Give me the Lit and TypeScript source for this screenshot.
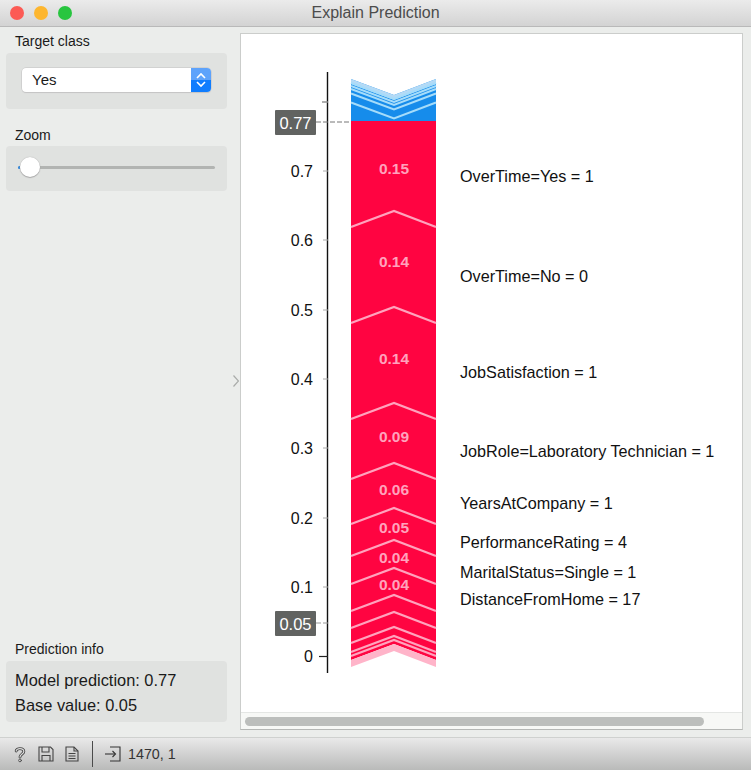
import { LitElement, html, svg, css } from "lit";
import { customElement } from "lit/decorators.js";

const LEFT = 351;
const MID = 394;
const RIGHT = 436;
const DROP = 16;

// red segments point up, blue ones point down
const chevron = (apex: number) =>
  `M${LEFT} ${apex + DROP} L${MID} ${apex} L${RIGHT} ${apex + DROP}`;
const vee = (apex: number) =>
  `M${LEFT} ${apex - DROP} L${MID} ${apex} L${RIGHT} ${apex - DROP}`;

const TICKS = [
  { label: "0.7", y: 171 },
  { label: "0.6", y: 240 },
  { label: "0.5", y: 310 },
  { label: "0.4", y: 379 },
  { label: "0.3", y: 448 },
  { label: "0.2", y: 518 },
  { label: "0.1", y: 587 },
];

const RED_LINES = [211, 307, 403, 463, 508, 540, 568, 595, 612, 627, 636, 640];
const BLUE_LINES = [118.5, 109.5, 105, 102, 99];

const VALUES = [
  { text: "0.15", y: 168.5 },
  { text: "0.14", y: 261.5 },
  { text: "0.14", y: 358.5 },
  { text: "0.09", y: 436.5 },
  { text: "0.06", y: 489.5 },
  { text: "0.05", y: 527.5 },
  { text: "0.04", y: 557.5 },
  { text: "0.04", y: 584.5 },
];

const FEATURES = [
  { text: "OverTime=Yes = 1", y: 176 },
  { text: "OverTime=No = 0", y: 276 },
  { text: "JobSatisfaction = 1", y: 372 },
  { text: "JobRole=Laboratory Technician = 1", y: 451 },
  { text: "YearsAtCompany = 1", y: 503 },
  { text: "PerformanceRating = 4", y: 542 },
  { text: "MaritalStatus=Single = 1", y: 572 },
  { text: "DistanceFromHome = 17", y: 599 },
];

@customElement("explain-chart")
class ExplainChart extends LitElement {
  static styles = css`
    :host {
      display: block;
      flex: 1;
      min-height: 0;
    }

    svg {
      display: block;
    }

    text {
      font-family: "Liberation Sans", Arial, sans-serif;
    }

    .tick {
      font-size: 16px;
      fill: #111;
      text-anchor: end;
      dominant-baseline: central;
    }

    .feature {
      font-size: 16.2px;
      fill: #111;
      dominant-baseline: central;
    }

    .value {
      font-size: 15.5px;
      font-weight: 700;
      fill: #ffa3bd;
      text-anchor: middle;
      dominant-baseline: central;
    }

    .badge {
      font-size: 16.5px;
      fill: #fff;
      text-anchor: middle;
      dominant-baseline: central;
    }
  `;

  render() {
    return html`<svg width="501" height="678" viewBox="241 34 501 678">
      <!-- blue stack -->
      <path d="M${LEFT} 79 L${MID} 95 L${RIGHT} 79 V121 H${LEFT} Z" fill="#168ceb" />
      <path d="M${LEFT} 79 L${MID} 95 L${RIGHT} 79 V84 L${MID} 100 L${LEFT} 84 Z" fill="#b4daf6" />
      ${BLUE_LINES.map(
        (a) => svg`<path d=${vee(a)} fill="none" stroke="#a5dcfa" stroke-width="2" />`
      )}

      <!-- red stack -->
      <path d="M${LEFT} 121 H${RIGHT} V660 L${MID} 644 L${LEFT} 660 Z" fill="#ff0441" />
      <path
        d="M${LEFT} 660 L${MID} 644 L${RIGHT} 660 V667 L${MID} 651 L${LEFT} 667 Z"
        fill="#ffb4c9"
      />
      ${RED_LINES.map(
        (a) => svg`<path d=${chevron(a)} fill="none" stroke="#ffa3bd" stroke-width="2.2" />`
      )}
      ${VALUES.map(
        (v) => svg`<text class="value" x=${MID} y=${v.y}>${v.text}</text>`
      )}
      ${FEATURES.map(
        (f) => svg`<text class="feature" x="460" y=${f.y}>${f.text}</text>`
      )}

      <!-- axis -->
      <line x1="327.5" y1="72" x2="327.5" y2="673" stroke="#111" stroke-width="1.4" />
      <line x1="322" y1="102" x2="328" y2="102" stroke="#8b8b8b" stroke-width="1.4" />
      ${TICKS.map(
        (t) => svg`
          <line x1="323" y1=${t.y} x2="328" y2=${t.y} stroke="#aaa" stroke-width="1" />
          <text class="tick" x="313" y=${t.y}>${t.label}</text>
        `
      )}
      <line x1="319" y1="656.5" x2="328" y2="656.5" stroke="#222" stroke-width="1.2" />
      <text class="tick" x="313" y="656">0</text>

      <!-- prediction and base value markers -->
      <line x1="316" y1="122" x2="351" y2="122" stroke="#777" stroke-width="1" stroke-dasharray="5 2" />
      <rect x="275" y="110" width="41" height="25" rx="1" fill="#616361" />
      <text class="badge" x="295.5" y="122.5">0.77</text>
      <line x1="316" y1="623" x2="328" y2="623" stroke="#999" stroke-width="1" stroke-dasharray="5 2" />
      <rect x="275" y="611" width="41" height="25" rx="1" fill="#616361" />
      <text class="badge" x="295.5" y="623.5">0.05</text>
    </svg>`;
  }
}

@customElement("app-root")
class AppRoot extends LitElement {
  static styles = css`
    :host {
      display: flex;
      flex-direction: column;
      width: 751px;
      height: 770px;
      overflow: hidden;
      background: #ebedeb;
      color: #1a1a1a;
      font-family: "Liberation Sans", Arial, sans-serif;
    }

    .titlebar {
      position: relative;
      display: flex;
      align-items: center;
      justify-content: center;
      height: 26px;
      flex: none;
      background: linear-gradient(#ebebeb, #d3d3d3);
      border-bottom: 1px solid #b9b9b9;
      color: #4c4c4c;
      font-size: 16px;
    }

    .lights {
      position: absolute;
      left: 10px;
      top: 6px;
      display: flex;
      gap: 10px;
    }

    .light {
      width: 14px;
      height: 14px;
      border-radius: 50%;
    }

    .red {
      background: #fc5b55;
    }

    .amber {
      background: #fdb62f;
    }

    .green {
      background: #28c53f;
    }

    .body {
      flex: 1;
      display: flex;
      min-height: 0;
    }

    .sidebar {
      width: 221px;
      flex: none;
      display: flex;
      flex-direction: column;
      padding: 6px 5px 15px 6px;
    }

    .heading {
      height: 16px;
      line-height: 16px;
      font-size: 14px;
      padding-left: 9px;
    }

    .group {
      background: #e0e2e0;
      border-radius: 4px;
      box-sizing: border-box;
    }

    .target {
      height: 56px;
      margin-top: 4px;
      padding: 15px 16px 0;
    }

    .combo {
      display: flex;
      height: 24px;
      background: #fff;
      border-radius: 4px;
      box-shadow: 0 0 0 0.5px #c2c2c2, 0 1px 1px #c8c8c8;
      overflow: hidden;
    }

    .combo span {
      flex: 1;
      padding-left: 10px;
      line-height: 23px;
      font-size: 15px;
    }

    .stepper {
      display: flex;
      align-items: center;
      justify-content: center;
      width: 20px;
      background: linear-gradient(#5ea3fb 0 50%, #0f7dfe 50% 100%);
    }

    .zoom-title {
      margin-top: 18px;
    }

    .zoom {
      height: 45px;
      margin-top: 3px;
      padding: 20px 12px 0 12px;
    }

    .slider {
      position: relative;
      height: 3px;
      border-radius: 2px;
      background: #b2b4b2;
    }

    .slider::before {
      content: "";
      position: absolute;
      left: 0;
      top: 0;
      width: 6px;
      height: 3px;
      border-radius: 2px;
      background: #2b86e0;
    }

    .thumb {
      position: absolute;
      left: 2px;
      top: -9px;
      width: 20px;
      height: 20px;
      border-radius: 50%;
      background: #fff;
      box-shadow: 0 0 1px #9a9a9a, 0 1px 1px #aaa;
    }

    .spacer {
      flex: 1;
    }

    .info {
      height: 61px;
      margin-top: 4px;
      padding: 7px 9px 0;
      font-size: 16.4px;
      line-height: 24.5px;
    }

    .splitter {
      width: 8px;
      flex: none;
      display: flex;
      align-items: center;
      justify-content: center;
      padding-bottom: 2px;
      box-sizing: border-box;
    }

    .canvas {
      flex: none;
      width: 503px;
      margin: 6px 0 7px;
      display: flex;
      flex-direction: column;
      background: #fff;
      border: 1px solid #cbcdcb;
      border-bottom-color: #b5b7b5;
      box-sizing: border-box;
    }

    .hscroll {
      flex: none;
      height: 17px;
      padding: 4px 38px 3px 4px;
      background: #f7f8f6;
      border-top: 1px solid #e4e6e4;
      box-sizing: border-box;
    }

    .hscroll div {
      height: 9px;
      border-radius: 5px;
      background: #bcbebc;
    }

    .statusbar {
      flex: none;
      height: 32px;
      display: flex;
      align-items: center;
      background: linear-gradient(#e9e9e9, #b9bab9);
      border-top: 1px solid #cfd1cf;
      padding-left: 13px;
      color: #333;
      font-size: 14.3px;
    }

    .statusbar svg {
      display: block;
      flex: none;
    }

    .tools {
      display: flex;
      align-items: center;
      gap: 11px;
    }

    .divider {
      width: 1px;
      height: 26px;
      margin: 0 12px 0 13px;
      background: #4a4a4a;
    }

    .count {
      margin-left: 7px;
    }
  `;

  render() {
    return html`
      <div class="titlebar">
        <div class="lights">
          <div class="light red"></div>
          <div class="light amber"></div>
          <div class="light green"></div>
        </div>
        Explain Prediction
      </div>
      <div class="body">
        <div class="sidebar">
          <div class="heading">Target class</div>
          <div class="group target">
            <div class="combo">
              <span>Yes</span>
              <div class="stepper">
                <svg width="12" height="18" viewBox="0 0 12 18" fill="none" stroke="#fff" stroke-width="1.6">
                  <path d="M2 7 L6 3 L10 7" />
                  <path d="M2 11 L6 15 L10 11" />
                </svg>
              </div>
            </div>
          </div>
          <div class="heading zoom-title">Zoom</div>
          <div class="group zoom">
            <div class="slider"><div class="thumb"></div></div>
          </div>
          <div class="spacer"></div>
          <div class="heading">Prediction info</div>
          <div class="group info">
            Model prediction: 0.77<br />
            Base value: 0.05
          </div>
        </div>
        <div class="splitter">
          <svg width="6" height="12" viewBox="0 0 6 12" fill="none" stroke="#a9aba9" stroke-width="1.2">
            <path d="M0.5 0.5 L5.5 6 L0.5 11.5" />
          </svg>
        </div>
        <div class="canvas">
          <explain-chart></explain-chart>
          <div class="hscroll"><div></div></div>
        </div>
      </div>
      <div class="statusbar">
        <div class="tools">
          <svg width="14" height="17" viewBox="0 0 14 20" fill="none" stroke-linecap="round">
            <path d="M2.5 6 C2.5 2 11.5 2 11.5 6.5 C11.5 9.5 7 9.5 7 13" stroke="#444" stroke-width="3.4" />
            <path d="M2.5 6 C2.5 2 11.5 2 11.5 6.5 C11.5 9.5 7 9.5 7 13" stroke="#dcdcdc" stroke-width="1.4" />
            <circle cx="7" cy="17" r="1.6" stroke="#444" stroke-width="1" fill="#dcdcdc" />
          </svg>
          <svg width="16" height="16" viewBox="0 0 16 16" fill="none" stroke="#444" stroke-width="1.1">
            <path d="M1 1 H12.5 L15 3.5 V15 H1 Z" />
            <path d="M4 1 V6 H11 V1" />
            <path d="M4 15 V9.5 H12 V15" />
          </svg>
          <svg width="14" height="16" viewBox="0 0 14 16" fill="none" stroke="#444" stroke-width="1.1">
            <path d="M1 1 H9 L13 5 V15 H1 Z" />
            <path d="M9 1 V5 H13" />
            <path d="M3.5 7.5 H10.5 M3.5 10 H10.5 M3.5 12.5 H10.5" />
          </svg>
        </div>
        <div class="divider"></div>
        <svg width="16" height="16" viewBox="0 0 16 16" fill="none" stroke="#333" stroke-width="1.1">
          <path d="M5 1 H15 V15 H5" />
          <path d="M0 8 H10" />
          <path d="M7.5 5 L10.5 8 L7.5 11" />
        </svg>
        <span class="count">1470, 1</span>
      </div>
    `;
  }
}

export { ExplainChart };
export default AppRoot;
